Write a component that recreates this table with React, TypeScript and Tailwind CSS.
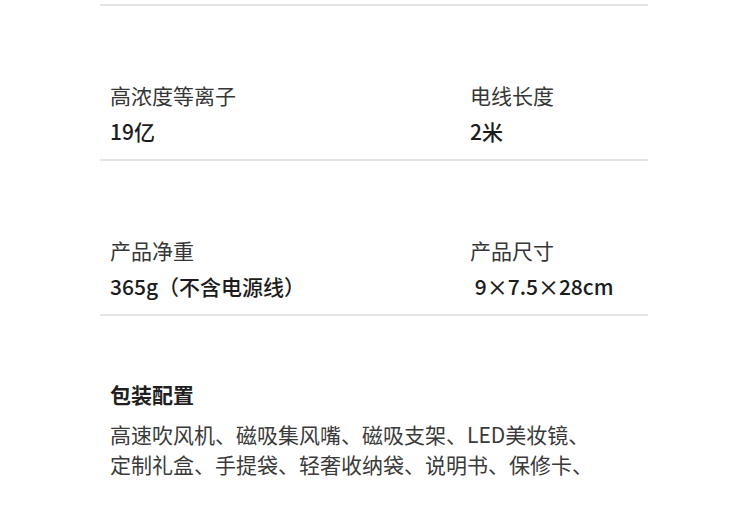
const specs = [
  [
    { label: "高浓度等离子", value: "19亿" },
    { label: "电线长度", value: "2米" },
  ],
  [
    { label: "产品净重", value: "365g（不含电源线）" },
    { label: "产品尺寸", value: " 9×7.5×28cm" },
  ],
];

export default function App() {
  return (
    <div
      className="w-[750px] h-[519px] bg-white overflow-hidden"
      style={{ fontFamily: '"Noto Sans CJK SC", "Noto Sans", sans-serif' }}
    >
      <div className="ml-[100px] w-[548px]">
        <div className="h-[6px] border-b-2 border-[#e3e3e3]"></div>
        {specs.map((row, i) => (
          <div key={i} className="flex pt-[72px] pb-[11px] border-b-2 border-[#e6e6e6]">
            {row.map((s) => (
              <div key={s.label} className="w-[360px] last:w-auto pl-[10px]">
                <div className="text-[21px] leading-[34px] text-[#363636]">{s.label}</div>
                <div className="mt-[2px] text-[21px] leading-[34px] font-medium text-[#1c1c1c] whitespace-pre">
                  {s.value}
                </div>
              </div>
            ))}
          </div>
        ))}
        <div className="pl-[10px] pt-[61px]">
          <div className="text-[21px] leading-[34px] font-bold text-[#1f1f1f]">包装配置</div>
          <div className="mt-[8px] text-[21px] leading-[30px] text-[#3a3a3a] whitespace-nowrap">
            <div>高速吹风机、磁吸集风嘴、磁吸支架、LED美妆镜、</div>
            <div>定制礼盒、手提袋、轻奢收纳袋、说明书、保修卡、</div>
          </div>
        </div>
      </div>
    </div>
  );
}
